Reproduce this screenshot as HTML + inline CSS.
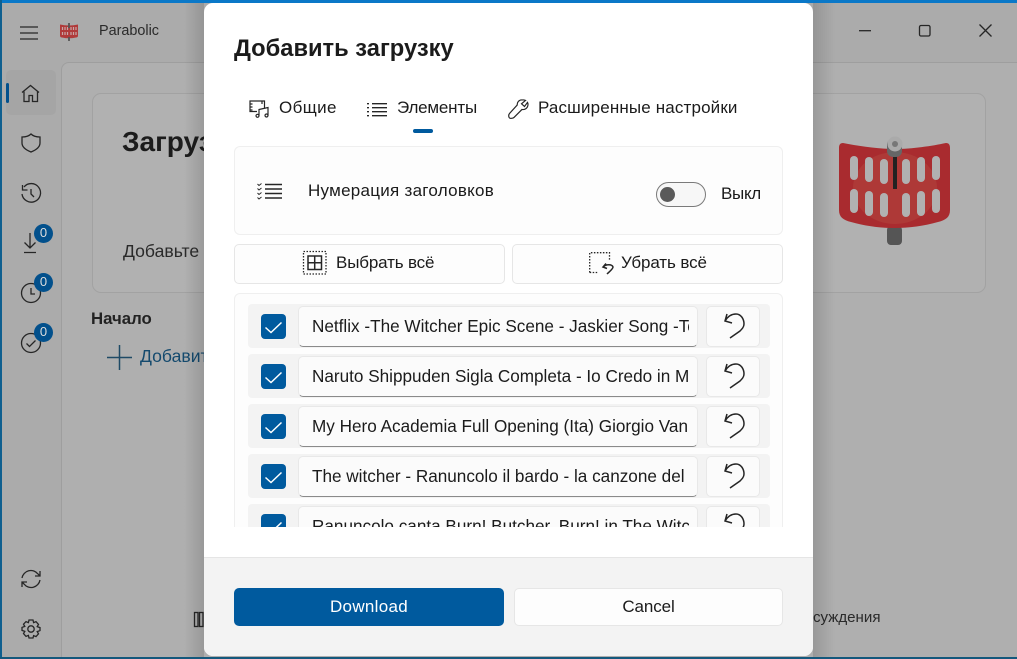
<!DOCTYPE html>
<html><head><meta charset="utf-8"><style>
html,body{margin:0;padding:0}
body{width:1017px;height:659px;overflow:hidden;position:relative;background:#ababab;font-family:"Liberation Sans","DejaVu Sans",sans-serif;color:#1b1b1b}
.a{position:absolute;white-space:nowrap;box-sizing:border-box}
svg{position:absolute;overflow:visible;fill:none;stroke:#262626;stroke-width:1.3}
.badge{position:absolute;left:34px;width:19px;height:19px;border-radius:50%;background:#02508c;color:#ddd;font-size:13px;line-height:17px;text-align:center}
.row{position:absolute;left:14px;width:522px;height:44px;background:#f3f3f3;border-radius:4px}
.cb{position:absolute;left:13px;top:10px;width:25px;height:25px;background:#005a9e;border-radius:4px}
.en{position:absolute;left:50px;top:2px;width:400px;height:41px;background:#fbfbfb;border:1px solid #e8e8e8;border-bottom:1px solid #8a8a8a;border-radius:5px;overflow:hidden;font-size:17.15px;line-height:39px;box-sizing:border-box;white-space:nowrap}
.en span{position:absolute;left:13px;width:377px;overflow:hidden;display:block}
.ub{position:absolute;left:458px;top:2px;width:54px;height:41px;background:#fbfbfb;border:1px solid #e8e8e8;border-radius:5px;box-sizing:border-box}
.btn{position:absolute;background:#fdfdfd;border:1px solid #e6e6e6;border-radius:5px;box-sizing:border-box}
.t{font-size:17px;line-height:19px}
</style></head><body>
<!-- window background -->
<div class="a" style="left:0;top:0;width:1017px;height:3px;background:#0a78c8"></div>
<div class="a" style="left:0;top:0;width:2px;height:659px;background:#0f5f8f"></div>
<div class="a" style="left:0;top:657px;width:1017px;height:2px;background:#14587c"></div>
<div class="a" style="left:61px;top:62px;width:956px;height:595px;background:#afafaf;border-left:1px solid #9e9e9e;border-top:1px solid #9e9e9e;border-top-left-radius:8px"></div>
<div class="a" style="left:92px;top:93px;width:894px;height:200px;background:#b1b1b1;border:1px solid #a2a2a2;border-radius:9px"></div>
<!-- menu -->
<svg style="left:20px;top:26px" width="19" height="14"><path d="M0 1h18M0 7h18M0 13h18"/></svg>
<svg style="left:60px;top:23px;stroke:none" width="18" height="18"><path d="M0 1.500q9 2 18 0v11q0 2-2 2-7 1.500-14 0-2 0-2-2z" fill="#b03a3a"/><path d="M2.500 4v3M5 4v3M7.500 4v3M11 4v3M13.500 4v3M16 4v3M2.500 9v3M5 9v3M7.500 9v3M11 9v3M13.500 9v3M16 9v3" stroke="#c7a8a8" stroke-width="1.200"/><path d="M9 0v5M9 14v4" stroke="#555" stroke-width="1.800"/></svg>
<div class="a" style="left:99px;top:22px;font-size:14.4px;line-height:18px;color:#2a2a2a">Parabolic</div>
<!-- sidebar -->
<div class="a" style="left:6px;top:70px;width:50px;height:45px;background:#a5a5a5;border-radius:5px"></div>
<div class="a" style="left:6px;top:83px;width:3px;height:20px;background:#02508c;border-radius:2px"></div>
<svg style="left:21px;top:84px" width="20" height="20"><path d="M1 8.500 9.500 1.500 18 8.500M3 7.500v10h5v-6h3.500v6h5v-10"/></svg>
<svg style="left:21px;top:133px" width="20" height="20"><path d="M10 1c2 2 5 3 9 3v6c0 4-4 7-9 9-5-2-9-5-9-9V4c4 0 7-1 9-3z"/></svg>
<svg style="left:21px;top:183px" width="20" height="20"><path d="M3 4a9.300 9.300 0 1 1-2 7M1.500 2v5h5M10 6v5l3 3"/></svg>
<svg style="left:24px;top:232px" width="12" height="21"><path d="M6 1v15M.5 10.500 6 16l5.500-5.500M0 20.500h12"/></svg>
<svg style="left:21px;top:283px" width="20" height="20"><circle cx="10" cy="10" r="9.500"/><path d="M10 5v6h4"/></svg>
<svg style="left:21px;top:333px" width="20" height="20"><circle cx="10" cy="10" r="9.500"/><path d="M5.500 10.500l3 3 6-6"/></svg>
<div class="badge" style="top:224px">0</div>
<div class="badge" style="top:273px">0</div>
<div class="badge" style="top:323px">0</div>
<svg style="left:21px;top:569px" width="20" height="20"><path d="M1 9a9 9 0 0 1 16-4l2 2M19 11a9 9 0 0 1-16 4l-2-2M19 2v5h-5M1 18v-5h5"/></svg>
<svg style="left:21px;top:619px" width="20" height="20"><circle cx="10" cy="10" r="3.200"/><path d="M8 1h4l.6 2.600 2.400-1 2.500 2.800-1.300 2.200 2.800 1v3l-2.800 1 1.300 2.200-2.500 2.800-2.400-1L12 19H8l-.6-2.600-2.400 1-2.500-2.800 1.300-2.200-2.800-1V8.400l2.800-1-1.300-2.200L5 2.600l2.400 1z"/></svg>
<!-- behind dialog -->
<div class="a" style="left:122px;top:125px;font-size:28px;font-weight:bold;line-height:34px;color:#1c1c1c">Загрузки</div>
<div class="a" style="left:123px;top:241px;font-size:17.600px;line-height:20px;color:#2a2a2a">Добавьте</div>
<div class="a" style="left:91px;top:309px;font-size:16.800px;font-weight:bold;line-height:19px;color:#222">Начало</div>
<svg style="left:107px;top:345px;stroke:#1f4a66;stroke-width:1.500" width="25" height="25"><path d="M0 12.500h25M12.500 0v25"/></svg>
<div class="a" style="left:140px;top:346px;font-size:17.600px;line-height:20px;color:#144a6e">Добавить</div>
<svg style="left:194px;top:612px" width="10" height="16" stroke-width="1"><rect x=".5" y=".5" width="3.500" height="14"/><rect x="5.500" y=".5" width="3.500" height="14"/></svg>
<div class="a" style="left:813px;top:609px;font-size:15.100px;line-height:18px;color:#2a2a2a">суждения</div>
<!-- logo -->
<svg style="left:838px;top:136px;stroke:none" width="114" height="112" viewBox="0 0 114 112">
<rect x="49" y="90" width="15" height="19" rx="4" fill="#555"/>
<path d="M5 7C20 10 40 13 57 13 74 13 94 10 108 7 111 7 112 9 112 12V74C112 81 108 84 100 86 72 94 41 94 13 86 5 84 1 81 1 74V12C1 9 2 7 5 7z" fill="#a92b2f"/>
<ellipse cx="57" cy="52" rx="42" ry="36" fill="#b0403a" opacity=".7"/>
<g fill="#b1b1b1"><rect x="12" y="20" width="8" height="24" rx="4"/><rect x="27" y="21" width="8" height="25" rx="4"/><rect x="42" y="23" width="8" height="25" rx="4"/><rect x="64" y="23" width="8" height="25" rx="4"/><rect x="79" y="21" width="8" height="25" rx="4"/><rect x="94" y="20" width="8" height="24" rx="4"/><rect x="12" y="53" width="8" height="24" rx="4"/><rect x="27" y="55" width="8" height="25" rx="4"/><rect x="42" y="57" width="8" height="24" rx="4"/><rect x="64" y="57" width="8" height="24" rx="4"/><rect x="79" y="55" width="8" height="25" rx="4"/><rect x="94" y="53" width="8" height="24" rx="4"/></g>
<rect x="55" y="20" width="4" height="33" fill="#222"/>
<rect x="49" y="3" width="15" height="18" rx="6" fill="#666"/><circle cx="57" cy="8" r="7.500" fill="#aaa"/><circle cx="57" cy="8" r="3" fill="#777"/>
</svg>
<!-- window buttons -->
<svg style="left:859px;top:30px" width="12" height="2"><path d="M0 .7h12"/></svg>
<svg style="left:919px;top:25px" width="12" height="12"><rect x=".5" y=".5" width="10.500" height="10.500" rx="1.500"/></svg>
<svg style="left:979px;top:24px" width="13" height="13"><path d="M.5.500l12 12M12.500.500l-12 12"/></svg>
<!-- side shadows -->
<div class="a" style="left:184px;top:3px;width:20px;height:654px;background:linear-gradient(to right,rgba(0,0,0,0),rgba(0,0,0,.13))"></div>
<div class="a" style="left:813px;top:3px;width:22px;height:654px;background:linear-gradient(to left,rgba(0,0,0,0),rgba(0,0,0,.13))"></div>
<!-- dialog -->
<div class="a" style="left:204px;top:3px;width:609px;height:653px;background:#fff;border-radius:9px;overflow:hidden">
 <div class="a" style="left:30px;top:31px;font-size:23.700px;font-weight:bold;line-height:30px;color:#1b1b1b">Добавить загрузку</div>
 <div class="a t" style="left:75px;top:95px;letter-spacing:.4px">Общие</div>
 <div class="a t" style="left:193px;top:95px;letter-spacing:-.2px">Элементы</div>
 <div class="a t" style="left:334px;top:95px;letter-spacing:.15px">Расширенные настройки</div>
 <svg style="left:45px;top:97px;stroke-width:1.200" width="21" height="18"><path d="M8 11.500H1V1h14.500v7M1 4h2.500M1 7h2.500M1 10h2.500M13 1v3"/><path d="M10 15.500V9.500l9-2v8"/><circle cx="8.500" cy="15.800" r="1.500"/><circle cx="17.500" cy="15.500" r="1.500"/></svg>
 <svg style="left:163px;top:100px;stroke-width:1.300" width="20" height="13"><path d="M5 .7h15M5 4.700h15M5 8.700h15M5 12.700h15M0 .7h2M0 4.700h2M0 8.700h2M0 12.700h2"/></svg>
 <svg style="left:304px;top:96px;stroke-width:1.200" width="21" height="20"><path d="M14 .8c-3 0-5 2.400-4.800 5.200L1.500 14.500c-1.500 2-.5 4-.0 4.500s3.300.6 4.500-.6l8-8c3 .7 6-1.500 6-5 0-.8-.2-1.400-.5-2L16.500 7.500 13.500 4.800 17.500 1.400c-1-.4-2.200-.6-3.500-.6z"/></svg>
 <div class="a" style="left:209px;top:126px;width:20px;height:4px;background:#005a9e;border-radius:2px"></div>
 <!-- numbering card -->
 <div class="a" style="left:30px;top:143px;width:549px;height:89px;background:#fdfdfd;border:1px solid #efefef;border-radius:6px"></div>
 <svg style="left:53px;top:180px;stroke-width:1.500" width="26" height="18"><path d="M8 1.500h17M8 6h17M8 10.500h17M8 15h17"/><path stroke-width="1" d="M.5 1l1.500 1.500 2.500-2M.5 5.500l1.500 1.500 2.500-2M.5 10l1.500 1.500 2.500-2M.5 14.500l1.500 1.500 2.500-2"/></svg>
 <div class="a t" style="left:104px;top:178px;letter-spacing:.27px">Нумерация заголовков</div>
 <div class="a" style="left:452px;top:179px;width:50px;height:25px;border:1px solid #7a7a7a;border-radius:13px;background:#f7f7f7"></div>
 <div class="a" style="left:456px;top:184px;width:15px;height:15px;border-radius:50%;background:#5a5a5a"></div>
 <div class="a t" style="left:517px;top:181px;letter-spacing:-.3px">Выкл</div>
 <!-- select buttons -->
 <div class="btn" style="left:30px;top:241px;width:271px;height:40px"></div>
 <div class="btn" style="left:308px;top:241px;width:271px;height:40px"></div>
 <svg style="left:99px;top:248px" width="24" height="24"><rect x=".5" y=".5" width="22.500" height="22.500" stroke-dasharray="1.500 1.500" stroke-width="1.300"/><rect x="5" y="5" width="13.500" height="13.500" stroke-width="1.500"/><path stroke-width="1.500" d="M11.700 5v13.500M5 11.700h13.500"/></svg>
 <div class="a t" style="left:132px;top:250px;letter-spacing:-.15px">Выбрать всё</div>
 <svg style="left:385px;top:249px" width="24" height="23"><path d="M.7 20.500V.7H20.500V8M.7 20.500H9" stroke-dasharray="1.500 1.500" stroke-width="1.300"/><path stroke-width="1.500" d="M17 11.500l-3 3.500 4 1.500M14 15c3-3 9-3 10 0 0 2-3 4-6 7"/></svg>
 <div class="a t" style="left:417px;top:250px;letter-spacing:-.1px">Убрать всё</div>
 <!-- list -->
 <div class="a" style="left:30px;top:290px;width:549px;height:234px;overflow:hidden">
  <div class="a" style="left:0;top:0;width:549px;height:300px;background:#fdfdfd;border:1px solid #efefef;border-radius:6px"></div>
  <div class="row" style="top:11px"><div class="cb"><svg style="left:4px;top:8px;stroke:#fff;stroke-width:1.500" width="17" height="11"><path d="M.5 5.500l5.500 5 10.500-10"/></svg></div><div class="en"><span>Netflix -The Witcher Epic Scene - Jaskier Song -Toss a Coin</span></div><div class="ub"><svg style="left:16px;top:5px;stroke-width:1.500" width="22" height="26"><path d="M4 2 2 9 9 11M2 9C5 4 9 2 13 2c5 0 8 5 8 10 0 3-2 5-4 7l-10 7"/></svg></div></div>
  <div class="row" style="top:61px"><div class="cb"><svg style="left:4px;top:8px;stroke:#fff;stroke-width:1.500" width="17" height="11"><path d="M.5 5.500l5.500 5 10.500-10"/></svg></div><div class="en"><span>Naruto Shippuden Sigla Completa - Io Credo in Me</span></div><div class="ub"><svg style="left:16px;top:5px;stroke-width:1.500" width="22" height="26"><path d="M4 2 2 9 9 11M2 9C5 4 9 2 13 2c5 0 8 5 8 10 0 3-2 5-4 7l-10 7"/></svg></div></div>
  <div class="row" style="top:111px"><div class="cb"><svg style="left:4px;top:8px;stroke:#fff;stroke-width:1.500" width="17" height="11"><path d="M.5 5.500l5.500 5 10.500-10"/></svg></div><div class="en"><span>My Hero Academia Full Opening (Ita) Giorgio Vanni</span></div><div class="ub"><svg style="left:16px;top:5px;stroke-width:1.500" width="22" height="26"><path d="M4 2 2 9 9 11M2 9C5 4 9 2 13 2c5 0 8 5 8 10 0 3-2 5-4 7l-10 7"/></svg></div></div>
  <div class="row" style="top:161px"><div class="cb"><svg style="left:4px;top:8px;stroke:#fff;stroke-width:1.500" width="17" height="11"><path d="M.5 5.500l5.500 5 10.500-10"/></svg></div><div class="en"><span>The witcher - Ranuncolo il bardo - la canzone del witcher</span></div><div class="ub"><svg style="left:16px;top:5px;stroke-width:1.500" width="22" height="26"><path d="M4 2 2 9 9 11M2 9C5 4 9 2 13 2c5 0 8 5 8 10 0 3-2 5-4 7l-10 7"/></svg></div></div>
  <div class="row" style="top:211px"><div class="cb"><svg style="left:4px;top:8px;stroke:#fff;stroke-width:1.500" width="17" height="11"><path d="M.5 5.500l5.500 5 10.500-10"/></svg></div><div class="en"><span>Ranuncolo canta Burn! Butcher, Burn! in The Witcher</span></div><div class="ub"><svg style="left:16px;top:5px;stroke-width:1.500" width="22" height="26"><path d="M4 2 2 9 9 11M2 9C5 4 9 2 13 2c5 0 8 5 8 10 0 3-2 5-4 7l-10 7"/></svg></div></div>
 </div>
 <!-- footer -->
 <div class="a" style="left:0;top:554px;width:609px;height:99px;background:#f3f3f3;border-top:1px solid #e5e5e5"></div>
 <div class="a" style="left:30px;top:585px;width:270px;height:38px;background:#005a9e;border-radius:5px;color:#fff;font-size:17px;letter-spacing:.3px;line-height:37px;text-align:center">Download</div>
 <div class="btn" style="left:310px;top:585px;width:269px;height:38px;font-size:17px;letter-spacing:-.1px;line-height:35px;text-align:center">Cancel</div>
</div>
</body></html>
